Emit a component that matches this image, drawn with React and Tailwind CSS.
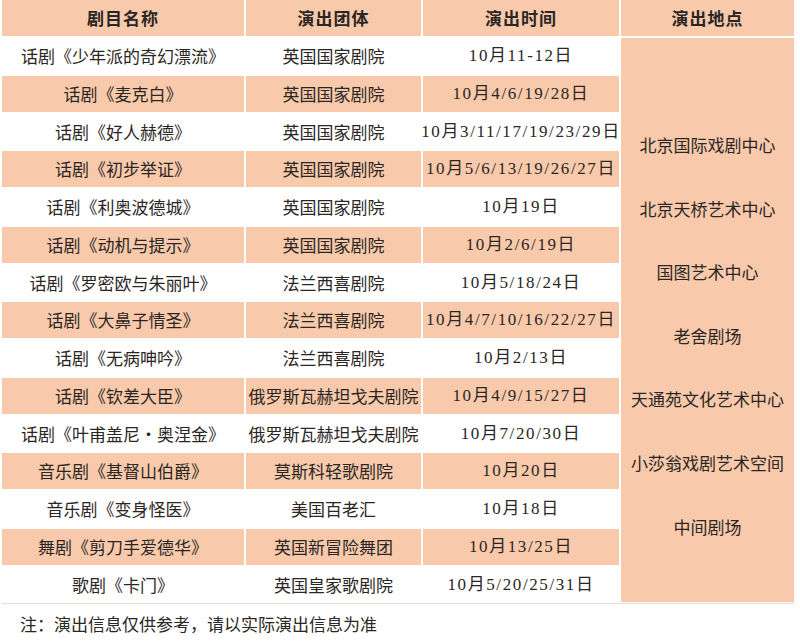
import React from "react";

const rows = [
  ["话剧《少年派的奇幻漂流》", "英国国家剧院", "10月11-12日"],
  ["话剧《麦克白》", "英国国家剧院", "10月4/6/19/28日"],
  ["话剧《好人赫德》", "英国国家剧院", "10月3/11/17/19/23/29日"],
  ["话剧《初步举证》", "英国国家剧院", "10月5/6/13/19/26/27日"],
  ["话剧《利奥波德城》", "英国国家剧院", "10月19日"],
  ["话剧《动机与提示》", "英国国家剧院", "10月2/6/19日"],
  ["话剧《罗密欧与朱丽叶》", "法兰西喜剧院", "10月5/18/24日"],
  ["话剧《大鼻子情圣》", "法兰西喜剧院", "10月4/7/10/16/22/27日"],
  ["话剧《无病呻吟》", "法兰西喜剧院", "10月2/13日"],
  ["话剧《钦差大臣》", "俄罗斯瓦赫坦戈夫剧院", "10月4/9/15/27日"],
  ["话剧《叶甫盖尼・奥涅金》", "俄罗斯瓦赫坦戈夫剧院", "10月7/20/30日"],
  ["音乐剧《基督山伯爵》", "莫斯科轻歌剧院", "10月20日"],
  ["音乐剧《变身怪医》", "美国百老汇", "10月18日"],
  ["舞剧《剪刀手爱德华》", "英国新冒险舞团", "10月13/25日"],
  ["歌剧《卡门》", "英国皇家歌剧院", "10月5/20/25/31日"],
];

const venues = [
  "北京国际戏剧中心",
  "北京天桥艺术中心",
  "国图艺术中心",
  "老舍剧场",
  "天通苑文化艺术中心",
  "小莎翁戏剧艺术空间",
  "中间剧场",
];

export default function App() {
  return (
    <div
      className="w-[800px] h-[643px] bg-white text-[#2b2624] overflow-hidden"
      style={{ fontFamily: '"Noto Sans CJK SC", serif' }}
    >
      <div className="pl-[2px] pr-[6px]">
        <div className="grid grid-cols-[242px_175px_196px_173px] grid-rows-[36px_repeat(15,35.75px)] gap-[2px] text-[17px] border-b border-[#e6dcd5] pb-[1px]">
          {["剧目名称", "演出团体", "演出时间", "演出地点"].map((h) => (
            <div
              key={h}
              className="bg-[#f8caab] flex items-center justify-center font-bold tracking-[1px]"
            >
              {h}
            </div>
          ))}
          {rows.map((r, i) => {
            const bg = i % 2 === 1 ? "bg-[#f8caab]" : "bg-white";
            return (
              <React.Fragment key={i}>
                <div className={`${bg} col-start-1 flex items-center justify-center whitespace-nowrap`}>
                  {r[0]}
                </div>
                <div className={`${bg} col-start-2 flex items-center justify-center whitespace-nowrap`}>
                  {r[1]}
                </div>
                <div
                  className={`${bg} col-start-3 flex items-center justify-center whitespace-nowrap tracking-[1.6px]`}
                  style={{ fontFamily: '"Liberation Serif", "Noto Sans CJK SC", serif' }}
                >
                  {r[2]}
                </div>
                {i === 0 && (
                  <div className="bg-[#f8caab] col-start-4 row-start-2 row-[span_15/span_15] flex flex-col items-center pt-[75px]">
                    {venues.map((v) => (
                      <div key={v} className="leading-[63.6px] h-[63.6px] whitespace-nowrap">
                        {v}
                      </div>
                    ))}
                  </div>
                )}
              </React.Fragment>
            );
          })}
        </div>
      </div>
      <div className="pl-[20px] pt-[8px] text-[17px] leading-[24px]">
        注：演出信息仅供参考，请以实际演出信息为准
      </div>
    </div>
  );
}
